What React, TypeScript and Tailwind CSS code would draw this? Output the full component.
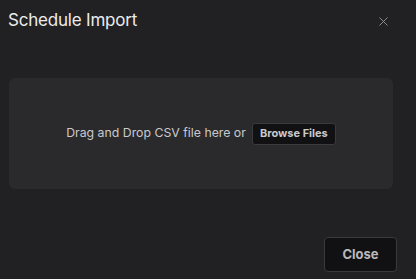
import React from 'react';
import { X } from 'lucide-react';

const App: React.FC = () => {
  return (
    <div
      className="w-[416px] h-[279px] bg-[#212123] flex flex-col"
      style={{ fontFamily: 'Inter, "Noto Sans", sans-serif' }}
    >
      <div className="flex items-center justify-between pl-[8px] pr-[25px] pt-[4px] h-[37px]">
        <h2 className="text-[17px] leading-none text-[#ececec] tracking-[-0.2px]">Schedule Import</h2>
        <button className="text-[#9a9a9e] mt-[2px]">
          <X className="w-[15px] h-[15px]" strokeWidth={1.4} />
        </button>
      </div>

      <div className="pl-[9px] pr-[23px] pt-[41px]">
        <div className="h-[111px] rounded-[6px] bg-[#2a2a2c] flex items-center justify-center gap-[6px]">
          <span className="text-[12.3px] text-[#c9c9cc]">Drag and Drop CSV file here or</span>
          <button className="h-[22px] px-[7px] rounded-[3px] bg-[#111113] border border-[#3a3a3d] text-[11px] font-bold text-[#c9c9cc]">
            Browse Files
          </button>
        </div>
      </div>

      <div className="flex justify-end px-[19px] pt-[48px]">
        <button className="w-[73px] h-[35px] rounded-[4px] bg-[#111113] border border-[#3a3a3d] text-[13px] font-bold text-[#b9b9bc]">
          Close
        </button>
      </div>
    </div>
  );
};

export default App;
